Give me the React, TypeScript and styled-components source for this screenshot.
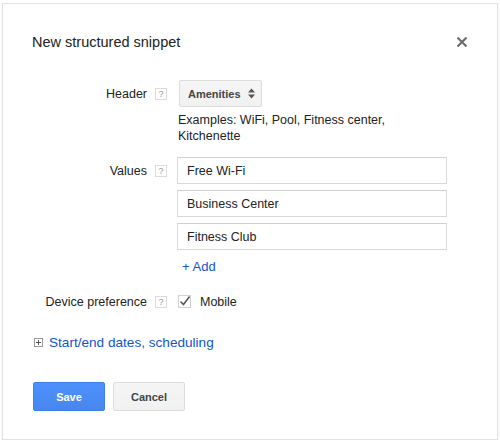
import styled, {createGlobalStyle} from "styled-components";

const GlobalStyle = createGlobalStyle`
  body {
    margin: 0;
    background: #ffffff;
    font-family: "Liberation Sans", Arial, sans-serif;
    color: #222;
  }
`;

const Dialog = styled.div`
  box-sizing: border-box;
  width: 496px;
  height: 437px;
  margin: 3px 0 0 2px;
  padding: 28px 29px 0 29px;
  border: 1px solid #e2e2e2;
  box-shadow: 0 1px 2px rgba(0, 0, 0, 0.08);
  background: #fff;
`;

const TitleBar = styled.div`
  display: flex;
  justify-content: space-between;
  align-items: center;
  height: 20px;
`;

const Title = styled.h1`
  margin: 0;
  font-size: 14.5px;
  font-weight: normal;
  line-height: 20px;
  color: #222;
`;

const CloseButton = styled.button`
  display: flex;
  padding: 0;
  margin-right: 1px;
  border: 0;
  background: transparent;
  cursor: pointer;
`;

const Form = styled.div`
  display: grid;
  grid-template-columns: 135px 270px;
  column-gap: 10px;
  row-gap: 13px;
  margin-top: 28px;
`;

const LabelCell = styled.div`
  display: flex;
  justify-content: flex-end;
  align-items: center;
  gap: 8px;
  height: 27px;
  font-size: 12.5px;
  white-space: nowrap;
`;

const Help = styled.span`
  box-sizing: border-box;
  display: inline-flex;
  align-items: center;
  justify-content: center;
  width: 12px;
  height: 12px;
  border: 1px solid #dcdcdc;
  font-size: 9px;
  color: #999;
`;

const Field = styled.div`
  display: flex;
  flex-direction: column;
  align-items: flex-start;
`;

const SelectButton = styled.button`
  box-sizing: border-box;
  display: flex;
  align-items: center;
  gap: 7px;
  height: 27px;
  margin-left: 2px;
  padding: 0 6px 0 8px;
  border: 1px solid #dcdcdc;
  border-radius: 2px;
  background: linear-gradient(#f5f5f5, #f1f1f1);
  font-family: inherit;
  font-size: 11px;
  font-weight: bold;
  color: #444;
`;

const Hint = styled.p`
  margin: 5px 0 0 1px;
  font-size: 12.5px;
  line-height: 16px;
  color: #222;
`;

const TextInput = styled.input`
  box-sizing: border-box;
  width: 270px;
  height: 27px;
  margin: 0 0 6px 0;
  padding: 0 9px;
  border: 1px solid #d9d9d9;
  border-top-color: #d0d0d0;
  font-family: inherit;
  font-size: 12.5px;
  color: #222;
  outline: none;
`;

const AddLink = styled.a`
  margin: 3px 0 0 5px;
  font-size: 13px;
  line-height: 16px;
  color: #15c;
  text-decoration: none;
  cursor: pointer;
`;

const CheckRow = styled.label`
  display: flex;
  align-items: center;
  gap: 9px;
  height: 27px;
  margin-left: 1px;
  font-size: 12.5px;
`;

const Expander = styled.div`
  display: flex;
  align-items: center;
  gap: 6px;
  margin: 18px 0 0 2px;
  height: 18px;
  font-size: 13.6px;
  color: #15c;
  cursor: pointer;
`;

const Actions = styled.div`
  display: flex;
  gap: 8px;
  margin: 31px 0 0 1px;
`;

const ActionButton = styled.button<{primary?: boolean}>`
  box-sizing: border-box;
  width: 72px;
  height: 29px;
  border-radius: 2px;
  border: 1px solid ${p => (p.primary ? "#3d7fe8" : "#dcdcdc")};
  background: ${p => (p.primary ? "linear-gradient(#4d90fe, #4787ed)" : "linear-gradient(#f5f5f5, #f1f1f1)")};
  color: ${p => (p.primary ? "#fff" : "#444")};
  font-family: inherit;
  font-size: 11px;
  font-weight: bold;
  cursor: pointer;
`;

const values = ["Free Wi-Fi", "Business Center", "Fitness Club"];

export default function App() {
  return (
    <>
      <GlobalStyle/>
      <Dialog>
        <TitleBar>
          <Title>New structured snippet</Title>
          <CloseButton aria-label="Close">
            <svg width="10" height="10" viewBox="0 0 10 10">
              <path d="M1.2 1.2 L8.8 8.8 M8.8 1.2 L1.2 8.8" stroke="#6a6a6a" strokeWidth="2.1" strokeLinecap="square"/>
            </svg>
          </CloseButton>
        </TitleBar>

        <Form>
          <LabelCell>Header <Help>?</Help></LabelCell>
          <Field>
            <SelectButton>
              Amenities
              <svg width="7" height="11" viewBox="0 0 7 11">
                <path d="M0 4.5 L3.5 0.5 L7 4.5 Z M0 6.5 L3.5 10.5 L7 6.5 Z" fill="#555"/>
              </svg>
            </SelectButton>
            <Hint>Examples: WiFi, Pool, Fitness center, Kitchenette</Hint>
          </Field>

          <LabelCell>Values <Help>?</Help></LabelCell>
          <Field>
            {values.map(v => <TextInput key={v} readOnly value={v}/>)}
            <AddLink>+ Add</AddLink>
          </Field>

          <LabelCell>Device preference <Help>?</Help></LabelCell>
          <Field>
            <CheckRow>
              <svg width="13" height="13" viewBox="0 0 13 13">
                <rect x="0.5" y="0.5" width="12" height="12" fill="#fff" stroke="#d2d2d2"/>
                <path d="M2.5 6.5 L5.5 9.5 L11.5 1.5" fill="none" stroke="#555" strokeWidth="1.5"/>
              </svg>
              Mobile
            </CheckRow>
          </Field>
        </Form>

        <Expander>
          <svg width="9" height="9" viewBox="0 0 9 9">
            <rect x="0.5" y="0.5" width="8" height="8" fill="#fff" stroke="#999"/>
            <path d="M2 4.5 H7 M4.5 2 V7" stroke="#555" strokeWidth="1"/>
          </svg>
          Start/end dates, scheduling
        </Expander>

        <Actions>
          <ActionButton primary>Save</ActionButton>
          <ActionButton>Cancel</ActionButton>
        </Actions>
      </Dialog>
    </>
  );
}
